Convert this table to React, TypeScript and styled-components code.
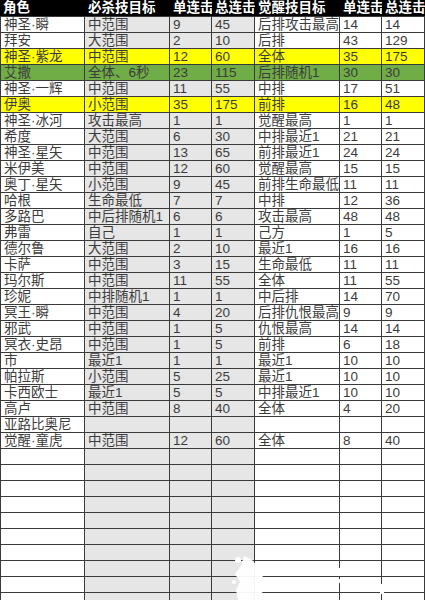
import styled, { createGlobalStyle } from "styled-components";

const GlobalStyle = createGlobalStyle`
  html, body {
    margin: 0;
    padding: 0;
    background: #ffffff;
  }
`;

const COLS = "85px 85px 42px 43px 85px 42px 43px";

const Sheet = styled.div`
  position: relative;
  width: 425px;
  height: 600px;
  overflow: hidden;
  font-family: "Liberation Sans", "Noto Sans CJK SC", sans-serif;
  font-size: 13.5px;
  color: #3c3c3c;
`;

const HeaderRow = styled.div`
  display: grid;
  grid-template-columns: ${COLS};
  height: 17px;
  background: #000000;
  border-bottom: 1px solid #3a3a3a;
  box-sizing: border-box;
`;

const HeadCell = styled.div`
  color: #ffffff;
  font-weight: 700;
  line-height: 16px;
  padding-left: 3px;
  white-space: nowrap;
  overflow: hidden;
`;

const Row = styled.div<{ $tone?: "yellow" | "green" }>`
  display: grid;
  grid-template-columns: ${COLS};
  height: 16px;
  box-sizing: border-box;
  border-bottom: 1px solid #3a3a3a;
  background: ${(p) =>
    p.$tone === "yellow" ? "#ffff00" : p.$tone === "green" ? "#70ad47" : "#ffffff"};
`;

const Cell = styled.div<{ $shade?: boolean; $first?: boolean }>`
  line-height: 15px;
  padding-left: 3px;
  white-space: nowrap;
  overflow: hidden;
  border-right: 1px solid #3a3a3a;
  border-left: ${(p) => (p.$first ? "1px solid #3a3a3a" : "none")};
  background: ${(p) => (p.$shade ? "#e6e6e6" : "transparent")};
`;

const Watermark = styled.svg`
  position: absolute;
  left: 0;
  top: 0;
  pointer-events: none;
`;

type Tone = "yellow" | "green" | undefined;

const rows: [string, string, string, string, string, string, string, Tone?][] = [
  ["神圣·瞬", "中范围", "9", "45", "后排攻击最高", "14", "14"],
  ["拜安", "大范围", "2", "10", "后排", "43", "129"],
  ["神圣·紫龙", "中范围", "12", "60", "全体", "35", "175", "yellow"],
  ["艾撒", "全体、6秒", "23", "115", "后排随机1", "30", "30", "green"],
  ["神圣·一辉", "中范围", "11", "55", "中排", "17", "51"],
  ["伊奥", "小范围", "35", "175", "前排", "16", "48", "yellow"],
  ["神圣·冰河", "攻击最高", "1", "1", "觉醒最高", "1", "1"],
  ["希度", "大范围", "6", "30", "中排最近1", "21", "21"],
  ["神圣·星矢", "中范围", "13", "65", "前排最近1", "24", "24"],
  ["米伊美", "中范围", "12", "60", "觉醒最高", "15", "15"],
  ["奥丁·星矢", "小范围", "9", "45", "前排生命最低", "11", "11"],
  ["哈根", "生命最低", "7", "7", "中排", "12", "36"],
  ["多路巴", "中后排随机1", "6", "6", "攻击最高", "48", "48"],
  ["弗雷", "自己", "1", "1", "己方", "1", "5"],
  ["德尔鲁", "大范围", "2", "10", "最近1", "16", "16"],
  ["卡萨", "中范围", "3", "15", "生命最低", "11", "11"],
  ["玛尔斯", "中范围", "11", "55", "全体", "11", "55"],
  ["珍妮", "中排随机1", "1", "1", "中后排", "14", "70"],
  ["冥王·瞬", "中范围", "4", "20", "后排仇恨最高", "9", "9"],
  ["邪武", "中范围", "1", "5", "仇恨最高", "14", "14"],
  ["冥衣·史昂", "中范围", "1", "5", "前排", "6", "18"],
  ["市", "最近1", "1", "1", "最近1", "10", "10"],
  ["帕拉斯", "小范围", "5", "25", "最近1", "10", "10"],
  ["卡西欧士", "最近1", "5", "5", "中排最近1", "10", "10"],
  ["高卢", "中范围", "8", "40", "全体", "4", "20"],
  ["亚路比奥尼", "", "", "", "", "", ""],
  ["觉醒·童虎", "中范围", "12", "60", "全体", "8", "40"],
  ...Array.from({ length: 10 }, () => ["", "", "", "", "", "", ""] as [string, string, string, string, string, string, string]),
];

const headers = ["角色", "必杀技目标", "单连击", "总连击", "觉醒技目标", "单连击", "总连击"];
const shaded = [false, true, true, true, false, false, false];

export default function App() {
  return (
    <Sheet>
      <GlobalStyle />
      <HeaderRow>
        {headers.map((h, i) => (
          <HeadCell key={i}>{h}</HeadCell>
        ))}
      </HeaderRow>
      {rows.map((r, ri) => {
        const tone = r[7];
        return (
          <Row key={ri} $tone={tone}>
            {r.slice(0, 7).map((c, ci) => (
              <Cell key={ci} $first={ci === 0} $shade={!tone && shaded[ci]}>
                {c}
              </Cell>
            ))}
          </Row>
        );
      })}
      <Watermark width="425" height="600" viewBox="0 0 425 600">
        <path
          d="M244 556 L252 560 L257 566 L263 568 L262 600 L238 600 L236 590 L240 582 L235 574 L241 566 Z"
          fill="#ffffff"
          opacity="0.95"
        />
        <circle cx="238" cy="560" r="3" fill="#ffffff" />
        <circle cx="234" cy="582" r="2" fill="#ffffff" />
        {[262, 280, 296, 318, 340, 352, 368, 384, 396, 410].map((x, i) => (
          <rect key={"a" + i} x={x} y={562} width={4 + (i % 3) * 2} height={4} fill="#ffffff" />
        ))}
        {[264, 276, 292, 306, 322, 338, 356, 372, 390, 404, 418].map((x, i) => (
          <rect key={"b" + i} x={x} y={579} width={3 + (i % 2) * 3} height={4} fill="#ffffff" />
        ))}
        <rect x="338" y="568" width="4" height="8" fill="#ffffff" />
        <rect x="380" y="584" width="4" height="10" fill="#ffffff" />
      </Watermark>
    </Sheet>
  );
}
